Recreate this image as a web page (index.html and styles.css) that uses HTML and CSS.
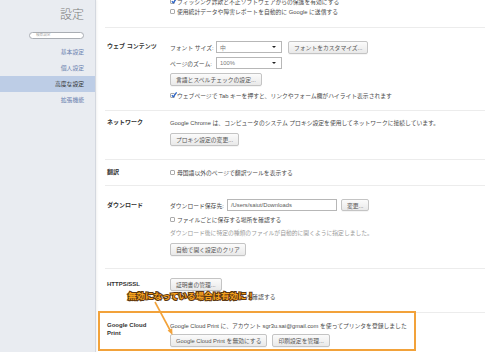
FILE: index.html
```html
<!DOCTYPE html>
<html lang="ja">
<head>
<meta charset="utf-8">
<title>設定</title>
<link rel="stylesheet" href="styles.css">
</head>
<body>
<div class="app">
  <aside class="sidebar">
    <h1 class="title">設定</h1>
    <div class="search"><span>検索設定</span></div>
    <nav class="nav">
      <div class="nav-item">基本設定</div>
      <div class="nav-item">個人設定</div>
      <div class="nav-item active">高度な設定</div>
      <div class="nav-item">拡張機能</div>
    </nav>
  </aside>
  <main class="main">
    <section class="section sec-top">
      <div class="label"></div>
      <div class="controls tight">
        <div class="row"><span class="cb checked"><svg viewBox="0 0 6 6"><path d="M0.8 3.2l1.6 1.6L5.6 0.4"/></svg></span>フィッシング詐欺と不正ソフトウェアからの保護を有効にする</div>
        <div class="row"><span class="cb"></span>使用統計データや障害レポートを自動的に Google に送信する</div>
      </div>
    </section>

    <section class="section sec-web">
      <div class="label">ウェブ コンテンツ</div>
      <div class="controls">
        <div class="row r12">
          <span class="flabel">フォント サイズ:</span>
          <span class="select"><span>中</span><i class="caret"></i></span>
          <span class="btn ml6">フォントをカスタマイズ...</span>
        </div>
        <div class="row r12">
          <span class="flabel">ページのズーム:</span>
          <span class="select"><span>100%</span><i class="caret"></i></span>
        </div>
        <div class="row r13"><span class="btn">言語とスペルチェックの設定...</span></div>
        <div class="row"><span class="cb checked"><svg viewBox="0 0 6 6"><path d="M0.8 3.2l1.6 1.6L5.6 0.4"/></svg></span>ウェブページで Tab キーを押すと、リンクやフォーム欄がハイライト表示されます</div>
      </div>
    </section>

    <section class="section sec-net">
      <div class="label">ネットワーク</div>
      <div class="controls gap6">
        <div class="row">Google Chrome は、コンピュータのシステム プロキシ設定を使用してネットワークに接続しています。</div>
        <div class="row r13"><span class="btn">プロキシ設定の変更...</span></div>
      </div>
    </section>

    <section class="section sec-tr">
      <div class="label">翻訳</div>
      <div class="controls">
        <div class="row"><span class="cb"></span>母国語以外のページで翻訳ツールを表示する</div>
      </div>
    </section>

    <section class="section sec-dl">
      <div class="label lbl12">ダウンロード</div>
      <div class="controls gap3">
        <div class="row r12">
          <span class="dlabel">ダウンロード保存先:</span>
          <span class="input">/Users/saiut/Downloads</span>
          <span class="btn h12 ml4">変更...</span>
        </div>
        <div class="row"><span class="cb"></span>ファイルごとに保存する場所を確認する</div>
        <div class="row muted">ダウンロード後に特定の種類のファイルが自動的に開くように指定しました。</div>
        <div class="row r13 mt3"><span class="btn">自動で開く設定のクリア</span></div>
      </div>
    </section>

    <section class="section sec-ssl">
      <div class="label lbl13">HTTPS/SSL</div>
      <div class="controls gap0">
        <div class="row r13"><span class="btn">証明書の管理...</span></div>
        <div class="row"><span class="cb"></span>サーバー証明書の取り消しを確認する</div>
      </div>
    </section>

    <section class="section sec-gcp">
      <div class="label wrap">Google Cloud Print</div>
      <div class="controls gap4">
        <div class="row">Google Cloud Print に、アカウント sgr3u.sai@gmail.com を使ってプリンタを登録しました</div>
        <div class="row r13">
          <span class="btn">Google Cloud Print を無効にする</span>
          <span class="btn ml5">印刷設定を管理...</span>
        </div>
      </div>
    </section>

    <div class="highlight"></div>
    <svg class="arrow" viewBox="0 0 404 352" width="404" height="352">
      <path d="M59 302 L74.5 331" />
      <polygon points="76.5,335 71.6,330.6 76.2,328.2" />
    </svg>
    <div class="callout">無効になっている場合は有効に！</div>
  </main>
</div>
</body>
</html>
```

FILE: styles.css
```css
* { box-sizing: border-box; margin: 0; padding: 0; }
html, body { width: 500px; height: 352px; overflow: hidden; }
body {
  font-family: "Liberation Sans", "Noto Sans CJK JP", sans-serif;
  font-size: 5.8px;
  color: #4a4a4a;
  background: #fff;
}
.app { display: flex; height: 352px; }

/* sidebar */
.sidebar {
  width: 96px;
  flex: none;
  background: #e9ecf1;
  border-right: 1px solid #d4d8df;
  box-shadow: 1px 0 2px rgba(0,0,0,0.06);
}
.title {
  font-family: "Noto Sans CJK JP", sans-serif;
  font-size: 12px;
  font-weight: 300;
  color: #7b7b7b;
  text-align: right;
  padding: 6px 11px 0 0;
  line-height: 16px;
}
.search {
  margin: 10px 11px 0 29px;
  height: 7px;
  border: 1px solid #a9adb3;
  border-radius: 4px;
  background: #fff;
  font-size: 3.6px;
  line-height: 5px;
  padding-left: 6px;
  color: #a5a5a5;
}
.nav { margin-top: 5px; }
.nav-item {
  height: 16px;
  line-height: 16px;
  text-align: right;
  padding-right: 11px;
  color: #6b82b0;
}
.nav-item.active { background: #bdcde6; color: #333; }

/* main */
.main { flex: 1; position: relative; }
.section {
  display: flex;
  margin: 0 15px 0 9px;
  border-top: 1px solid #ececec;
}
.label {
  width: 65px;
  flex: none;
  padding-left: 2px;
  font-weight: bold;
  color: #333;
  font-size: 6px;
  line-height: 10px;
}
.label.lbl12 { line-height: 12px; }
.label.lbl13 { line-height: 13px; }
.label.wrap { padding-right: 14px; line-height: 8px; padding-top: 1px; }
.controls { display: flex; flex-direction: column; gap: 4px; }
.controls.tight, .controls.gap0 { gap: 0; }
.controls.gap3 { gap: 3px; }
.controls.gap6 { gap: 6px; }
.controls.gap4 { gap: 4px; }
.row {
  display: flex;
  align-items: center;
  height: 10px;
  white-space: nowrap;
}
.row.r12 { height: 12px; }
.row.r13 { height: 13px; }
.mt3 { margin-top: 3px; }
.muted { color: #9a9a9a; }

.sec-top { border-top: none; margin-top: -4px; padding-bottom: 11px; }
.sec-web { padding: 13px 0 10px; }
.sec-web .label { margin-top: 0; }
.sec-net { padding: 6px 0 13px; }
.sec-tr { padding: 7px 0 8px; }
.sec-dl { padding: 13px 0 12px; }
.sec-ssl { padding: 9px 0 11px; }
.sec-gcp { padding: 7px 0 4px; }

/* checkbox */
.cb {
  width: 5px;
  height: 5px;
  border: 1px solid #ababab;
  border-radius: 1px;
  background: #fff;
  margin-right: 2px;
  flex: none;
  position: relative;
}
.cb svg {
  position: absolute;
  left: -0.5px;
  top: -1.5px;
  width: 6px;
  height: 6px;
  overflow: visible;
}
.cb svg path { fill: none; stroke: #2c64c8; stroke-width: 1.3; }

/* form controls */
.flabel { width: 46px; flex: none; }
.dlabel { width: 57px; flex: none; }
.select {
  width: 66px;
  height: 12px;
  border: 1px solid #b7b7b7;
  background: #fff;
  display: flex;
  align-items: center;
  justify-content: space-between;
  padding: 0 5px 0 3px;
  color: #7a7a7a;
}
.caret {
  width: 0;
  height: 0;
  border-left: 2px solid transparent;
  border-right: 2px solid transparent;
  border-top: 2.5px solid #222;
}
.input {
  width: 110px;
  height: 12px;
  border: 1px solid #b7b7b7;
  background: #fff;
  display: flex;
  align-items: center;
  padding-left: 3px;
  color: #5a5a5a;
}
.btn {
  display: inline-flex;
  align-items: center;
  height: 13px;
  padding: 0 5px;
  border: 1px solid #c4c4c4;
  border-radius: 2px;
  background: linear-gradient(#fbfbfb, #e9e9e9);
  color: #555;
  box-shadow: 0 1px 0 rgba(0,0,0,0.04);
}
.btn.h12 { height: 12px; }
.ml4 { margin-left: 4px; }
.ml5 { margin-left: 5px; }
.ml6 { margin-left: 6px; }

/* annotations */
.highlight {
  position: absolute;
  left: 2px;
  top: 311px;
  width: 318px;
  height: 40px;
  border: 2px solid #f2a23a;
}
.arrow { position: absolute; left: 0; top: 0; }
.arrow path { stroke: #f2a23a; stroke-width: 1.6; fill: none; }
.arrow polygon { fill: #f2a23a; }
.callout {
  position: absolute;
  left: 32px;
  top: 289px;
  font-family: "Noto Sans CJK JP", sans-serif;
  font-weight: bold;
  font-size: 8.5px;
  line-height: 12px;
  color: #f6a21e;
  -webkit-text-stroke: 2px #5c3812;
  paint-order: stroke fill;
  white-space: nowrap;
}
```
